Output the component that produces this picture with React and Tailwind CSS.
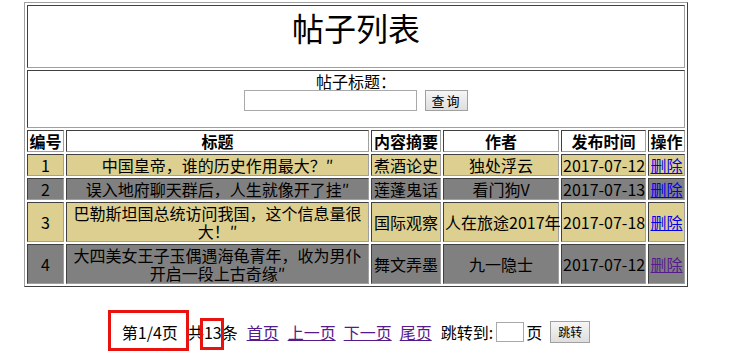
import React from 'react';

const posts = [
  { id: 1, title: '中国皇帝，谁的历史作用最大？″', summary: '煮酒论史', author: '独处浮云', date: '2017-07-12', visited: false },
  { id: 2, title: '误入地府聊天群后，人生就像开了挂″', summary: '莲蓬鬼话', author: '看门狗V', date: '2017-07-13', visited: false },
  { id: 3, title: '巴勒斯坦国总统访问我国，这个信息量很大！″', summary: '国际观察', author: '人在旅途2017年', date: '2017-07-18', visited: false },
  { id: 4, title: '大四美女王子玉偶遇海龟青年，收为男仆开启一段上古奇缘″', summary: '舞文弄墨', author: '九一隐士', date: '2017-07-12', visited: true },
];

const cell = 'border border-t-[#404040] border-l-[#404040] border-r-[#a0a0a0] border-b-[#a0a0a0] text-center';

const App = () => {
  return (
    <div className="relative w-[746px] h-[361px] overflow-hidden bg-white text-black text-[16px] font-['Noto_Sans_CJK_SC',sans-serif]">
      <table className="ml-[24px] mt-[2px] w-[664px] table-fixed border-separate border-spacing-[2px] border border-t-[#a0a0a0] border-l-[#a0a0a0] border-r-[#404040] border-b-[#404040]">
        <colgroup>
          <col className="w-[37px]" />
          <col className="w-[303px]" />
          <col className="w-[70px]" />
          <col className="w-[116px]" />
          <col className="w-[85px]" />
          <col className="w-[37px]" />
        </colgroup>
        <tbody>
          <tr>
            <td colSpan={6} className={cell + ' h-[63px] align-top pt-[3px] text-[32px] leading-[37px]'}>
              帖子列表
            </td>
          </tr>
          <tr>
            <td colSpan={6} className={cell + ' h-[58px] align-top pt-[1px] leading-[18px]'}>
              <div>帖子标题：</div>
              <div className="flex justify-center items-center gap-[8px]">
                <input type="text" className="w-[173px] h-[21px] border border-[#a9a9a9] bg-white" />
                <button className="w-[43px] h-[21px] border border-[#a0a0a0] bg-gradient-to-b from-[#f6f6f6] to-[#dedede] text-[13px] leading-[19px] tracking-[2px]">
                  查询
                </button>
              </div>
            </td>
          </tr>
          <tr className="font-bold bg-white leading-[18px]">
            <th className={cell + ' p-[1px] whitespace-nowrap'}>编号</th>
            <th className={cell + ' p-[1px]'}>标题</th>
            <th className={cell + ' p-[1px] whitespace-nowrap'}>内容摘要</th>
            <th className={cell + ' p-[1px]'}>作者</th>
            <th className={cell + ' p-[1px] whitespace-nowrap'}>发布时间</th>
            <th className={cell + ' p-[1px] whitespace-nowrap'}>操作</th>
          </tr>
          {posts.map((p) => (
            <tr key={p.id} className={(p.id % 2 === 1 ? 'bg-[#dccf8f]' : 'bg-[#808080]') + ' leading-[18px]'}>
              <td className={cell + ' p-[1px]'}>{p.id}</td>
              <td className={cell + ' p-[1px]'}>{p.title}</td>
              <td className={cell + ' p-[1px] whitespace-nowrap'}>{p.summary}</td>
              <td className={cell + ' p-[1px] whitespace-nowrap'}>{p.author}</td>
              <td className={cell + ' p-[1px] whitespace-nowrap'}>{p.date}</td>
              <td className={cell + ' p-[1px] whitespace-nowrap'}>
                <a href="#" className={(p.visited ? 'text-[#551a8b]' : 'text-[#0000ee]') + ' underline'}>删除</a>
              </td>
            </tr>
          ))}
        </tbody>
      </table>

      <div className="ml-[24px] w-[664px] mt-[34px] flex justify-center items-center leading-[22px]">
        <span>第1/4页</span>
        <span className="ml-[10px]">共13条</span>
        <a href="#" className="ml-[9px] underline text-[#551a8b]">首页</a>
        <a href="#" className="ml-[9px] underline text-[#551a8b]">上一页</a>
        <a href="#" className="ml-[8px] underline text-[#551a8b]">下一页</a>
        <a href="#" className="ml-[8px] underline text-[#551a8b]">尾页</a>
        <span className="ml-[9px]">跳转到:</span>
        <input type="text" className="ml-[3px] w-[28px] h-[20px] border border-[#a9a9a9] bg-white" />
        <span className="ml-[2px]">页</span>
        <button className="ml-[8px] w-[40px] h-[22px] border border-[#a0a0a0] bg-gradient-to-b from-[#f6f6f6] to-[#dedede] text-[12px] leading-[20px]">
          跳转
        </button>
      </div>

      <div className="absolute left-[108px] top-[310px] w-[81px] h-[41px] border-[3px] border-[#e8120f]" />
      <div className="absolute left-[200px] top-[318px] w-[24px] h-[32px] border-[3px] border-[#e8120f]" />
    </div>
  );
};

export default App;
